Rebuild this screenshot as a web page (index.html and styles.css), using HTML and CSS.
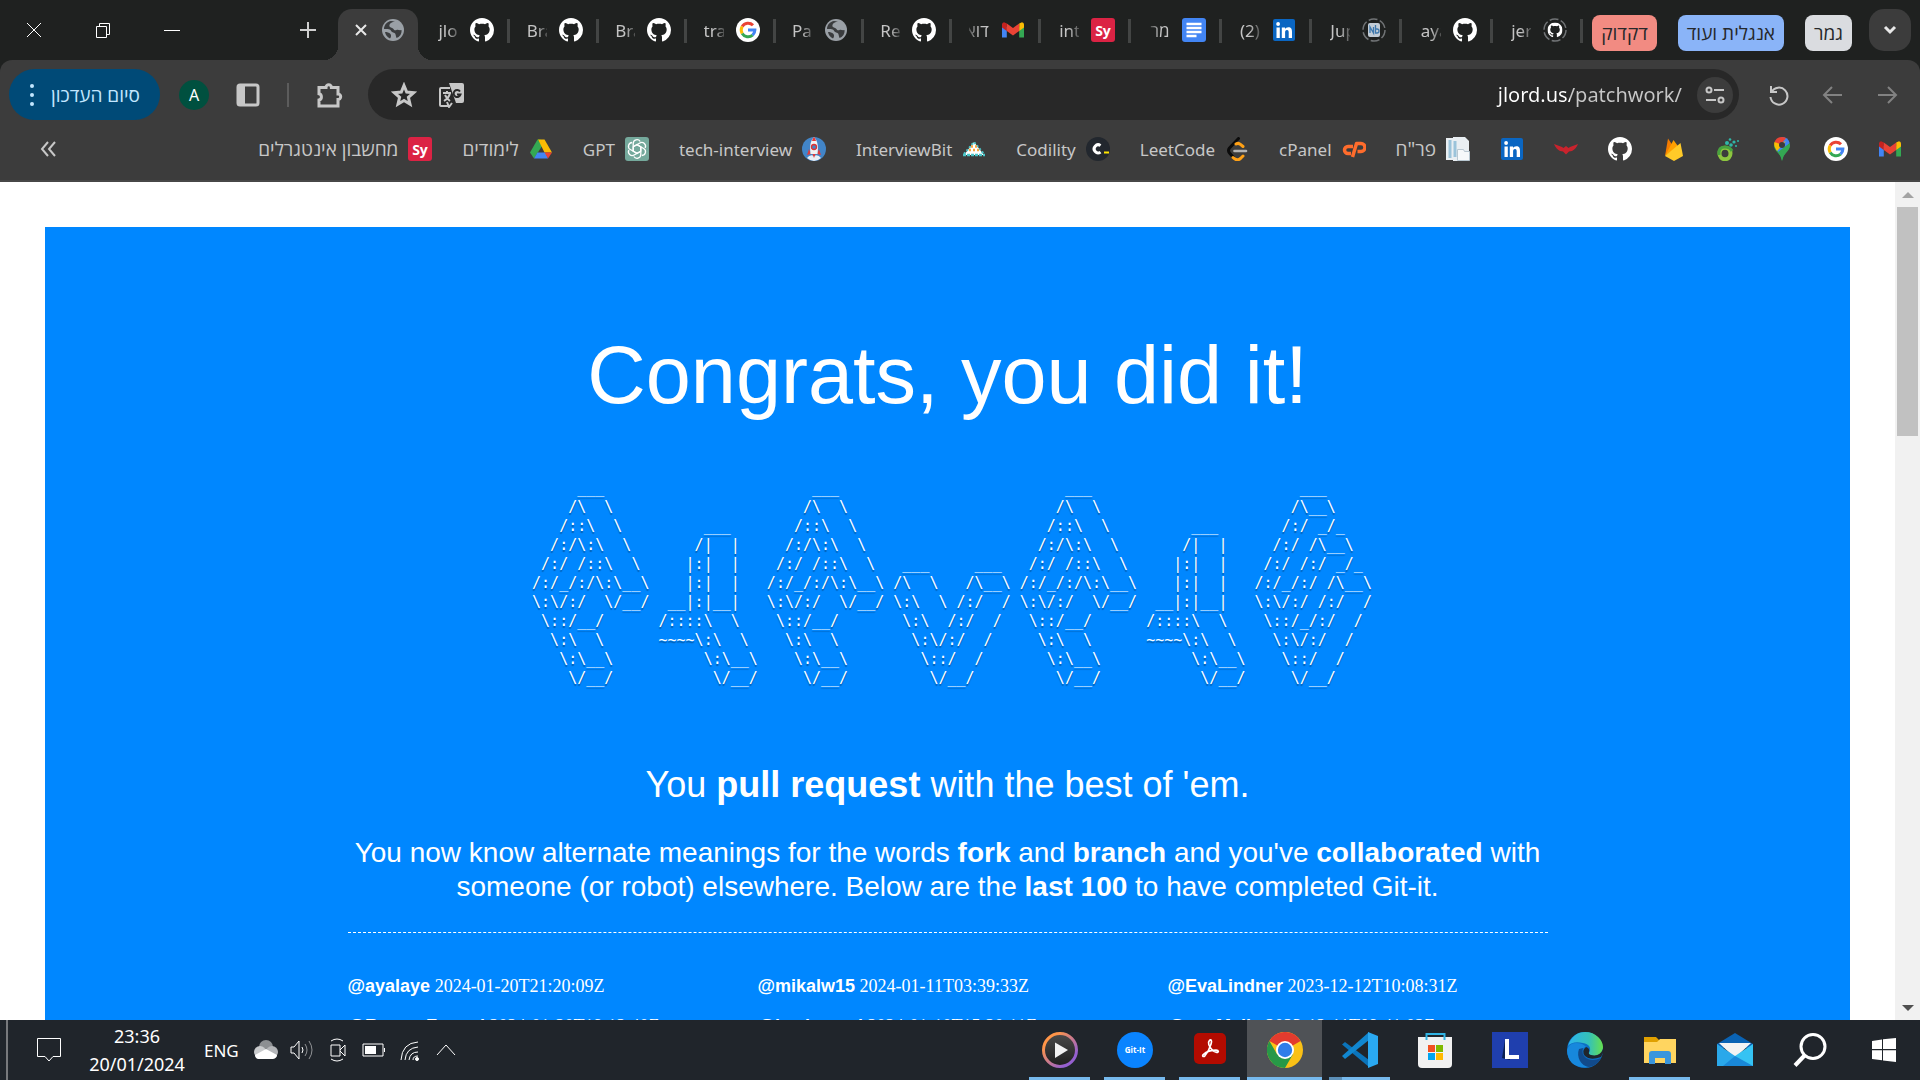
FILE: index.html
```html
<!DOCTYPE html>
<html lang="en">
<head>
<meta charset="utf-8">
<title>jlord.us/patchwork/</title>
<link rel="stylesheet" href="styles.css">
</head>
<body>
<svg class="defs" aria-hidden="true">
  <defs>
    <linearGradient id="ring" x1="0" y1="0" x2="1" y2="1"><stop offset="0.2" stop-color="#ff9548"/><stop offset="0.8" stop-color="#9560d0"/></linearGradient>
    <linearGradient id="edgeTop" x1="0" y1="0" x2="1" y2="0"><stop offset="0" stop-color="#2bb3ee"/><stop offset="0.6" stop-color="#35c1b8"/><stop offset="1" stop-color="#66e04e"/></linearGradient>
    <linearGradient id="play" x1="0" y1="0" x2="0" y2="1"><stop offset="0" stop-color="#4a4a4a"/><stop offset="1" stop-color="#1e1e1e"/></linearGradient>
  </defs>
  <symbol id="github" viewBox="0 0 16 16"><path fill="currentColor" d="M8 0C3.58 0 0 3.58 0 8c0 3.54 2.29 6.53 5.47 7.59.4.07.55-.17.55-.38 0-.19-.01-.82-.01-1.49-2.01.37-2.53-.49-2.69-.94-.09-.23-.48-.94-.82-1.13-.28-.15-.68-.52-.01-.53.63-.01 1.08.58 1.23.82.72 1.21 1.87.87 2.33.66.07-.52.28-.87.51-1.07-1.78-.2-3.64-.89-3.64-3.95 0-.87.31-1.59.82-2.15-.08-.2-.36-1.02.08-2.12 0 0 .67-.21 2.2.82.64-.18 1.32-.27 2-.27s1.36.09 2 .27c1.53-1.04 2.2-.82 2.2-.82.44 1.1.16 1.92.08 2.12.51.56.82 1.27.82 2.15 0 3.07-1.87 3.75-3.65 3.95.29.25.54.73.54 1.48 0 1.07-.01 1.93-.01 2.2 0 .21.15.46.55.38A8.01 8.01 0 0 0 16 8c0-4.42-3.58-8-8-8z"/></symbol>
  <symbol id="globe" viewBox="0 0 24 24"><circle cx="12" cy="12" r="11" fill="#9aa0a6"/><path fill="#3a3c3e" d="M14 3.500C10 4 8 6 8.500 8.500c1 1.500 3 1 4 2.500.5 1.500 2 1.500 3 1 1.500-.5 3 .5 5 0 .5 4-2 7-5 8-1-2.500-.5-4-2-5-2-.5-3-1-4-3C8 10.500 5 11 3 11 3 7 6 3.500 10 3zM4 14c2 0 4 .5 5.500 2 1 1.500.5 3-.5 4.500C6 19 4.500 17 4 14z"/></symbol>
  <symbol id="google" viewBox="0 0 24 24"><circle cx="12" cy="12" r="12" fill="#fff"/><path fill="none" stroke="#ea4335" stroke-width="3" d="M6.200 8.500A6.900 6.900 0 0 1 17 7.200"/><path fill="none" stroke="#fbbc05" stroke-width="3" d="M6.200 8.500a7 7 0 0 0 0 7"/><path fill="none" stroke="#34a853" stroke-width="3" d="M6.200 15.500a6.900 6.900 0 0 0 10.400 1.700"/><path fill="none" stroke="#4285f4" stroke-width="3" d="M12 12h6.900a7 7 0 0 1-2.300 5.200"/></symbol>
  <symbol id="gmail" viewBox="0 0 24 24"><path fill="#4285f4" d="M1 6v13.500h4.800V9z"/><path fill="#34a853" d="M23 6v13.500h-4.800V9z"/><path fill="#fbbc04" d="M18.200 5.500L21 4.200q2 .2 2 2.300v3l-4.800 3.500z"/><path fill="#c5221f" d="M1 9.500v-3q0-2.100 2-2.300l2.800 1.300V13z"/><path fill="#ea4335" d="M5.800 5.500L12 10l6.200-4.500V13L12 17.500 5.800 13z"/></symbol>
  <symbol id="symbolab" viewBox="0 0 24 24"><rect width="24" height="24" rx="3" fill="#db2344"/><text x="12" y="18" text-anchor="middle" class="glyph-sy">Sy</text></symbol>
  <symbol id="docs" viewBox="0 0 24 24"><rect width="24" height="24" rx="3" fill="#4285f4"/><path stroke="#fff" stroke-width="2.500" d="M4.500 6h15M4.500 10h15M4.500 14h15M4.500 18h10"/></symbol>
  <symbol id="linkedin" viewBox="0 0 24 24"><rect x="1" y="1" width="22" height="22" rx="2" fill="#0a66c2"/><path fill="#fff" d="M4.500 9.500h3.300V20H4.500zM9.800 9.500H13V11c.6-1.100 1.800-1.800 3.300-1.800 3 0 3.700 2 3.700 4.600V20h-3.300v-5.500c0-1.500-.2-2.500-1.700-2.500s-1.900 1.100-1.900 2.500V20H9.800z"/><circle cx="6.100" cy="6" r="1.900" fill="#fff"/></symbol>
  <symbol id="notebook" viewBox="0 0 24 24"><circle cx="12" cy="12" r="11" fill="none" stroke="#707375" stroke-width="1.500" stroke-dasharray="9 2.500"/><rect x="6" y="5" width="12" height="14" rx="2" fill="#c3cdd6"/><path d="M8 15V9l3.500 6V9M13.500 7v8h1.500a2 2 0 0 0 0-4h-1.500" fill="none" stroke="#3f79ae" stroke-width="1.300"/></symbol>
  <symbol id="ghload" viewBox="0 0 24 24"><circle cx="12" cy="12" r="11" fill="none" stroke="#707375" stroke-width="1.500" stroke-dasharray="9 2.500"/><use href="#github" x="4.500" y="4.500" width="15" height="15"/></symbol>
  <symbol id="drive" viewBox="0 0 24 24"><path fill="#34a853" d="M8.500 2.500h1L13 9 5 21.500 1 15.500z"/><path fill="#188038" d="M8.500 2.500H12l1.500 7z"/><path fill="#fbbc04" d="M9 2.500h6.500L23 15.500h-7.500z"/><path fill="#4285f4" d="M8.500 15.500h8L19 21.500H5z"/><path fill="#ea4335" d="M15.500 15.500H23l-4 6z"/></symbol>
  <symbol id="gpt" viewBox="0 0 24 24"><rect width="24" height="24" rx="3" fill="#75a99c"/><g fill="none" stroke="#fff" stroke-width="1.300"><g id="petal"><path d="M8.200 10V6.500a3.800 3.800 0 0 1 7-2M8.200 10v4.200L12 16.400"/></g><use href="#petal" transform="rotate(60 12 12)"/><use href="#petal" transform="rotate(120 12 12)"/><use href="#petal" transform="rotate(180 12 12)"/><use href="#petal" transform="rotate(240 12 12)"/><use href="#petal" transform="rotate(300 12 12)"/></g></symbol>
  <symbol id="rocket" viewBox="0 0 24 24"><circle cx="12" cy="12" r="12" fill="#4285c8"/><path fill="#e03b3b" d="M7 12l-2 6 4-1zM17 12l2 6-4-1z"/><path fill="#f2f2f2" d="M12 0c3.500 4 4.500 8 3.500 17h-7C7.500 8 8.500 4 12 0z"/><path fill="#e03b3b" d="M12 0c1 1 1.700 2.500 2 4h-4c.3-1.500 1-3 2-4z"/><circle cx="12" cy="10" r="2.500" fill="#4285c8" stroke="#d33" stroke-width="1.300"/><path fill="#e8eef5" d="M5 21q3-4 7-2 4-2 7 2-7 6-14 0z"/><path fill="#e03b3b" d="M10.500 17h3L12 21z"/></symbol>
  <symbol id="interviewbit" viewBox="0 0 24 24"><path fill="#fff" d="M12 5l10 13H2z"/><path stroke="#4cc5c8" stroke-width="2.500" stroke-dasharray="3 1" d="M1 18h22"/><path fill="none" stroke="#4cc5c8" stroke-width="2" stroke-dasharray="2 2" d="M2 17L12 5l10 12"/><path stroke="#f5a742" stroke-width="2.500" stroke-dasharray="2 2" d="M7 13h10M9 9.500h6"/></symbol>
  <symbol id="codility" viewBox="0 0 24 24"><circle cx="12" cy="12" r="12" fill="#22272e"/><path fill="none" stroke="#fff" stroke-width="3" d="M14.500 8.600a4 4 0 1 0 0 6.500"/><path stroke="#ffe600" stroke-width="2" d="M18 15.500h5"/></symbol>
  <symbol id="leetcode" viewBox="0 0 24 24"><path fill="none" stroke="#0b0b0b" stroke-width="3" stroke-linecap="round" d="M13.500 1.500L4.500 11q-2 2.500 0 5l4 4.500"/><path fill="none" stroke="#ffa116" stroke-width="3" stroke-linecap="round" d="M11 7q2.500-1.500 4.500.5L18 9.500M8 20.500q4 4 7.500 1l2.500-2.500"/><path stroke="#b3b3b3" stroke-width="2.600" stroke-linecap="round" d="M9.500 14h11.500"/></symbol>
  <symbol id="cpanel" viewBox="0 0 24 24"><path fill="none" stroke="#ff6c2c" stroke-width="3.500" stroke-linejoin="round" d="M11 9.500H6a3.500 3.500 0 0 0 0 7h3M10.500 20l4-13.500h4.500a3.600 3.600 0 0 1 0 8h-3.500"/></symbol>
  <symbol id="papers" viewBox="0 0 24 24"><path fill="#e9eef2" d="M0 1h13v22H0zM7 0h12l4 4v20H7z"/><path stroke="#9bc3da" stroke-width="3" d="M4 3v18M9 4v16"/><path fill="#f6f9fb" stroke="#b8c7d1" stroke-width="1" d="M11.500 12.500h6l1 2h5v9h-12z"/></symbol>
  <symbol id="bird" viewBox="0 0 24 24"><path fill="#c9232d" d="M0 7l8 3 1.500 1 2.500-2 2.500 2L16 10l8-3q-2 5-6 7l-3 .5-3 3-3-3-3-.5Q2 12 0 7z"/></symbol>
  <symbol id="firebase" viewBox="0 0 24 24"><path fill="#f57c00" d="M3 19L6 1.500 11 9z"/><path fill="#ffa000" d="M3 19L11.500 3l5 7z"/><path fill="#ffca28" d="M3 19L18.500 6 21 19l-9 5z"/></symbol>
  <symbol id="olive" viewBox="0 0 24 24"><ellipse cx="9" cy="16.500" rx="5.500" ry="5.800" fill="none" stroke="#8dc63f" stroke-width="4"/><path fill="none" stroke="#47a23f" stroke-width="3" d="M3 18q-1-8 6-8 5 0 7 4"/><g fill="#2fb8a8"><circle cx="11" cy="6" r="2"/><circle cx="15" cy="8" r="1.800"/><circle cx="18" cy="5" r="1.600"/><circle cx="14" cy="2.500" r="1.300"/><circle cx="22" cy="4" r="1"/><circle cx="20" cy="9" r="1"/></g></symbol>
  <symbol id="maps" viewBox="0 0 24 24"><path fill="#34a853" d="M12 24c0-7-8-9-8-16h16c0 7-8 9-8 16z"/><path fill="#4285f4" d="M12 0a8 8 0 0 1 7.700 6L10 17 6 12z"/><path fill="#ea4335" d="M12 0a8 8 0 0 0-7.500 5L10 9l6-8q-2-1-4-1z"/><path fill="#fbbc04" d="M4.500 5Q3 9 7 14l9-10-6 3z"/><path fill="#34a853" d="M19.700 6Q21 10 16 15q-3 4-4 9-1-5-4-9z"/><circle cx="12" cy="8" r="3" fill="#3c3c3c"/></symbol>
  <symbol id="acrobat" viewBox="0 0 24 24"><path fill="none" stroke="#fff" stroke-width="1.500" d="M11 5c1.500-1.500 2.500 0 1.500 3-1 3.500-3.500 8-5.500 10.500-1.500 1.500-3 0-1-1.500 3-2.500 8-3.500 11-3.500 2.500 0 2.500 2 .5 2-3-.3-6-4-7-7-.5-1.700 0-3 .5-3.500z"/></symbol>
</svg>

<header class="browser">
  <div class="tabstrip">
    <div class="window-controls">
      <button aria-label="Close"><svg width="16" height="16"><path d="M1 1l14 14M15 1L1 15"/></svg></button>
      <button aria-label="Restore"><svg width="16" height="16"><path d="M1.500 4.500h10v11h-10zM4.500 4.500v-3h10v11h-3"/></svg></button>
      <button aria-label="Minimize"><svg width="16" height="16"><path d="M0 8.500h16"/></svg></button>
    </div>
    <button class="new-tab" aria-label="New tab"><svg width="16" height="16"><path d="M8 0v16M0 8h16"/></svg></button>
    <button class="tab-active" aria-label="jlord.us/patchwork"><svg width="14" height="14" class="x"><path d="M2 2l10 10M12 2L2 12"/></svg><svg class="fav"><use href="#globe"/></svg></button>
    <nav class="tabs">
      <button class="tab"><span class="cut">jlo</span><svg class="fav"><use href="#github"/></svg></button>
      <button class="tab"><span class="cut">Bra</span><svg class="fav"><use href="#github"/></svg></button>
      <button class="tab"><span class="cut">Bra</span><svg class="fav"><use href="#github"/></svg></button>
      <button class="tab"><span class="cut">tra</span><svg class="fav"><use href="#google"/></svg></button>
      <button class="tab"><span class="cut">Pa</span><svg class="fav"><use href="#globe"/></svg></button>
      <button class="tab"><span class="cut">Re</span><svg class="fav"><use href="#github"/></svg></button>
      <button class="tab"><span class="cut rtl">דוא</span><svg class="fav"><use href="#gmail"/></svg></button>
      <button class="tab"><span class="cut">int</span><svg class="fav"><use href="#symbolab"/></svg></button>
      <button class="tab"><span class="cut rtl">מר</span><svg class="fav"><use href="#docs"/></svg></button>
      <button class="tab"><span class="cut">(2)</span><svg class="fav"><use href="#linkedin"/></svg></button>
      <button class="tab"><span class="cut">Jup</span><svg class="fav"><use href="#notebook"/></svg></button>
      <button class="tab"><span class="cut">aya</span><svg class="fav"><use href="#github"/></svg></button>
      <button class="tab"><span class="cut">jer</span><svg class="fav"><use href="#ghload"/></svg></button>
    </nav>
    <div class="groups">
      <button class="chip red">דקדוק</button>
      <button class="chip blue">אנגלית ועוד</button>
      <button class="chip grey">גמר</button>
    </div>
    <button class="tab-search" aria-label="Search tabs"><svg width="14" height="10"><path d="M2 2l5 5 5-5"/></svg></button>
  </div>

  <div class="toolbar">
    <button class="update"><svg width="6" height="24"><circle cx="3" cy="3" r="2"/><circle cx="3" cy="12" r="2"/><circle cx="3" cy="21" r="2"/></svg><span>סיום העדכון</span></button>
    <button class="avatar">A</button>
    <button class="tool" aria-label="Side panel"><svg width="24" height="24"><path class="solid" d="M2 1h7v22H2z"/><rect x="2" y="2" width="20" height="20" rx="2"/></svg></button>
    <span class="rule"></span>
    <button class="tool" aria-label="Extensions"><svg width="28" height="28"><path d="M3 6.500h7a2.700 2.700 0 0 1 5.400 0H22v6.500a2.700 2.700 0 0 1 0 5.400V25H3v-6a3.200 3.200 0 0 0 0-6.200z"/></svg></button>
    <div class="omnibox">
      <button aria-label="Bookmark"><svg width="26" height="26"><path d="M13 3.500l2.700 6.600 7 .6-5.300 4.600 1.600 6.900-6-3.700-6 3.700 1.600-6.900-5.300-4.600 7-.6z"/></svg></button>
      <button aria-label="Translate"><svg width="26" height="26"><path class="solid" d="M10 1h13q2 0 2 2v16q0 2-2 2h-6z"/><path class="thin" d="M13 21l-3 4-2-5M11 6H2q-1 0-1 1v16q0 1 1 1h9"/><path class="thin" d="M4 11h8M8 9v2M11 11q-1 5-6 8M6 13q2 4 5 6"/><path class="dark" d="M21 9.500a3.500 3.500 0 1 0 .5 3h-3.500"/></svg></button>
      <input type="text" aria-label="Address" value="jlord.us/patchwork/">
      <button class="tune" aria-label="Site information"><svg width="20" height="18"><circle cx="4" cy="4" r="2.500"/><path d="M9 4h10M1 14h10"/><circle cx="16" cy="14" r="2.500"/></svg></button>
    </div>
    <div class="nav">
      <button aria-label="Reload"><svg width="24" height="24"><path d="M4 3v6h6M4.500 9a8.500 8.500 0 1 1-1 5"/></svg></button>
      <button class="off" aria-label="Back"><svg width="24" height="24"><path d="M21 12H4M11 4l-8 8 8 8"/></svg></button>
      <button class="off" aria-label="Forward"><svg width="24" height="24"><path d="M3 12h17M13 4l8 8-8 8"/></svg></button>
    </div>
  </div>

  <nav class="bookmarks">
    <button class="more" aria-label="More bookmarks"><svg width="16" height="16"><path d="M8 1L2 8l6 7M15 1L9 8l6 7"/></svg></button>
    <a href="#" class="he">מחשבון אינטגרלים<svg class="fav"><use href="#symbolab"/></svg></a>
    <a href="#" class="he">לימודים<svg class="fav"><use href="#drive"/></svg></a>
    <a href="#">GPT<svg class="fav"><use href="#gpt"/></svg></a>
    <a href="#">tech-interview<svg class="fav"><use href="#rocket"/></svg></a>
    <a href="#">InterviewBit<svg class="fav"><use href="#interviewbit"/></svg></a>
    <a href="#">Codility<svg class="fav"><use href="#codility"/></svg></a>
    <a href="#">LeetCode<svg class="fav"><use href="#leetcode"/></svg></a>
    <a href="#">cPanel<svg class="fav"><use href="#cpanel"/></svg></a>
    <a href="#" class="he">פר"ח<svg class="fav"><use href="#papers"/></svg></a>
    <a href="#" aria-label="LinkedIn"><svg class="fav"><use href="#linkedin"/></svg></a>
    <a href="#" aria-label="Bird"><svg class="fav"><use href="#bird"/></svg></a>
    <a href="#" aria-label="GitHub"><svg class="fav"><use href="#github"/></svg></a>
    <a href="#" aria-label="Firebase"><svg class="fav"><use href="#firebase"/></svg></a>
    <a href="#" aria-label="Olive"><svg class="fav"><use href="#olive"/></svg></a>
    <a href="#" aria-label="Maps"><svg class="fav"><use href="#maps"/></svg></a>
    <a href="#" aria-label="Google"><svg class="fav"><use href="#google"/></svg></a>
    <a href="#" aria-label="Gmail"><svg class="fav"><use href="#gmail"/></svg></a>
  </nav>
</header>

<div class="viewport">
  <main class="page">
    <section class="panel">
      <h1>Congrats, you did it!</h1>
<pre class="ascii">
     ___                       ___                         ___                       ___     
    /\  \                     /\  \                       /\  \                     /\__\    
   /::\  \         ___       /::\  \                     /::\  \         ___       /:/ _/_   
  /:/\:\  \       /|  |     /:/\:\  \                   /:/\:\  \       /|  |     /:/ /\__\  
 /:/ /::\  \     |:|  |    /:/ /::\  \   ___     ___   /:/ /::\  \     |:|  |    /:/ /:/ _/_ 
/:/_/:/\:\__\    |:|  |   /:/_/:/\:\__\ /\  \   /\__\ /:/_/:/\:\__\    |:|  |   /:/_/:/ /\__\
\:\/:/  \/__/  __|:|__|   \:\/:/  \/__/ \:\  \ /:/  / \:\/:/  \/__/  __|:|__|   \:\/:/ /:/  /
 \::/__/      /::::\  \    \::/__/       \:\  /:/  /   \::/__/      /::::\  \    \::/_/:/  / 
  \:\  \      ~~~~\:\  \    \:\  \        \:\/:/  /     \:\  \      ~~~~\:\  \    \:\/:/  /  
   \:\__\          \:\__\    \:\__\        \::/  /       \:\__\          \:\__\    \::/  /   
    \/__/           \/__/     \/__/         \/__/         \/__/           \/__/     \/__/    
</pre>
      <h2>You <b>pull request</b> with the best of 'em.</h2>
      <p class="lead">You now know alternate meanings for the words <b>fork</b> and <b>branch</b> and you've <b>collaborated</b> with someone (or robot) elsewhere. Below are the <b>last 100</b> to have completed Git-it.</p>
      <ul class="people">
        <li><a href="#">@ayalaye</a> 2024-01-20T21:20:09Z</li>
        <li><a href="#">@mikalw15</a> 2024-01-11T03:39:33Z</li>
        <li><a href="#">@EvaLindner</a> 2023-12-12T10:08:31Z</li>
        <li><a href="#">@RamonFarmal</a> 2024-01-20T19:12:40Z</li>
        <li><a href="#">@kaehnoval</a> 2024-01-10T15:20:11Z</li>
        <li><a href="#">@sueMalla</a> 2023-12-11T09:41:02Z</li>
      </ul>
    </section>
  </main>
  <div class="scrollbar"><svg width="12" height="6"><path fill="#a3a3a3" d="M0 6l6-6 6 6z"/></svg><div class="thumb"></div><svg width="12" height="6"><path fill="#505050" d="M0 0h12L6 6z"/></svg></div>
</div>

<footer class="taskbar">
  <span class="show-desktop"></span>
  <button class="notice" aria-label="Notifications"><svg width="26" height="26"><path d="M1.500 1.500h23v18h-7.500L13 24l-4-4.500H1.500z"/></svg></button>
  <div class="clock"><span>23:36</span><span>20/01/2024</span></div>
  <span class="lang">ENG</span>
  <div class="tray">
    <svg width="26" height="24"><circle cx="13" cy="9" r="7" fill="#8c8f92"/><circle cx="7" cy="14" r="6" fill="#c9cbcd"/><circle cx="19" cy="14" r="6" fill="#b4b6b9"/><path fill="#fff" d="M2 17l11-6 11 6q0 3-4 4H5q-3-1-3-4z"/></svg>
    <svg width="26" height="24"><path d="M2 9h3l5-6v18l-5-6H2zM13 9q2 3 0 6"/><path opacity=".5" d="M16 6q4 6 0 12M20 3q6 9 0 18"/></svg>
    <svg width="26" height="24"><path d="M6 7h9v11H6zM15 12l5-5v11l-5-5M6 3q6-4 12 0M6 21q6 4 12 0"/></svg>
    <svg width="26" height="24"><path d="M2 6h20v12H2zM23.500 10v4"/><path fill="#fff" stroke="none" d="M4 8h11v8H4z"/></svg>
    <svg width="26" height="24"><path d="M4 22Q5 5 21 4M8 22q1-12 13-13M12 22q1-8 9-8M16 22q0-4 5-4"/><circle cx="20" cy="21" r="1.500" fill="#fff"/></svg>
    <svg width="26" height="24"><path d="M4 17l9-10 9 10"/></svg>
  </div>
  <nav class="apps">
    <button class="app run" aria-label="Media player"><svg viewBox="0 0 36 36"><circle cx="18" cy="18" r="16.500" fill="url(#play)" stroke="url(#ring)" stroke-width="3"/><path fill="#f2f2f2" d="M13 10.500v15.500l13-8z"/></svg></button>
    <button class="app run" aria-label="Git-it"><svg viewBox="0 0 36 36"><circle cx="18" cy="18" r="18" fill="#0a84ff"/><text x="18" y="21" text-anchor="middle" class="glyph-git">Git-It</text></svg></button>
    <button class="app run" aria-label="Acrobat"><svg viewBox="0 0 36 36"><rect x="2" y="1" width="32" height="31" rx="5" fill="#b30b00"/><use href="#acrobat" x="5" y="3" width="27" height="27"/></svg></button>
    <button class="app run current" aria-label="Chrome"><svg viewBox="0 0 36 36"><circle cx="18" cy="18" r="18" fill="#fbc116"/><path fill="#e33b2e" d="M18 18L2.400 9A18 18 0 0 1 33.600 9z"/><path fill="#279847" d="M2.400 9A18 18 0 0 0 18 36l7.800-13.500L18 18l-7.800 4.500z"/><circle cx="18" cy="18" r="9" fill="#fff"/><circle cx="18" cy="18" r="7.200" fill="#2f7de9"/></svg></button>
    <button class="app run multi" aria-label="Visual Studio Code"><svg viewBox="0 0 36 36"><path fill="#0b74ba" d="M0 12.500l3-2.500 24 18v7z"/><path fill="#1187d0" d="M0 24l3 3 24-19V0z"/><path fill="#2aa9f2" d="M26 0l10 4v28l-10 4z"/></svg></button>
    <button class="app" aria-label="Store"><svg viewBox="0 0 36 36"><path fill="none" stroke="#31b4e4" stroke-width="2" d="M9.500 8V2h18v6"/><path fill="#f1f1f1" d="M1 5h34v27q0 4-4 4H5q-4 0-4-4z"/><path fill="none" stroke="#31b4e4" stroke-width="2" d="M9.500 8V5M27.500 8V5"/><path fill="#f25022" d="M11 13h7v7h-7z"/><path fill="#7fba00" d="M19 13h7v7h-7z"/><path fill="#00a4ef" d="M11 21h7v7h-7z"/><path fill="#ffb900" d="M19 21h7v7h-7z"/></svg></button>
    <button class="app" aria-label="L"><svg viewBox="0 0 36 36"><path fill="#1f3fae" d="M0 0h36v36H0z"/><path fill="#0a2050" d="M13 8l-3 18 8 2z"/><path fill="none" stroke="#fff" stroke-width="4" d="M15 7v18h12"/></svg></button>
    <button class="app" aria-label="Edge"><svg viewBox="0 0 36 36"><circle cx="18" cy="18" r="18" fill="#0d6fc4"/><path fill="url(#edgeTop)" d="M1 14C4 4 11 0 18 0c11 0 18 8 18 15 0 6-5 9-9 9-4 .5-6-1-5-3 3-5 0-9-6-10C10 9.500 4 10 1 14z"/><path fill="#1788dd" d="M0 18Q2 11 9 11q7 0 10 4c-7 1-10 14 2 20Q1 37 0 18z"/><path fill="#114a8b" d="M12 17c-3 8 2 17 10 18q8-1 12-9-9 4-15 0-5-4-3-10z"/><path fill="#20262d" d="M19 15q-5 4-1 9 5 5 16 1l2-4v-4q-3 8-12 6-3-1-2-3 1-4-3-5z"/></svg></button>
    <button class="app run" aria-label="File Explorer"><svg viewBox="0 0 36 36"><path fill="#e0a000" d="M2 5h12l3 3v4H2z"/><path fill="#ffd560" d="M2 10h13l3-3h16v24H2z"/><path fill="#3a96dd" d="M7 32V22q0-3 3-3h16q3 0 3 3v10h-6v-6H13v6z"/></svg></button>
    <button class="app" aria-label="Mail"><svg viewBox="0 0 36 36"><path fill="#0a63b4" d="M0 12L18 1l18 11v4H0z"/><path fill="#f3f3f3" d="M2 11h32L18 26z"/><path fill="#2aa8ea" d="M0 12l18 12v10H0z"/><path fill="#35c3f3" d="M36 12L18 24l-8 10h26z"/><path fill="#1988d8" d="M18 24l18 10H6z"/></svg></button>
    <button class="app" aria-label="Search"><svg viewBox="0 0 36 36"><circle cx="21" cy="14.500" r="12" fill="none" stroke="#fff" stroke-width="3"/><path stroke="#fff" stroke-width="4" d="M13 23L3 33.500"/></svg></button>
    <button class="app" aria-label="Start"><svg viewBox="0 0 36 36"><path fill="#fff" d="M6 9l10-1.500V17H6zM17 7.300L30 6v11H17zM6 18.300h10v10L6 27zM17 18.300h13V30l-13-1.600z"/></svg></button>
  </nav>
</footer>
</body>
</html>
```
FILE: styles.css
```css
* { box-sizing: border-box; }
body {
  margin: 0;
  height: 100vh;
  display: flex;
  flex-direction: column;
  overflow: hidden;
  font-family: "Noto Sans", "Open Sans", sans-serif;
  background: #fff;
}
button {
  border: 0;
  padding: 0;
  margin: 0;
  background: none;
  color: inherit;
  font: inherit;
  display: flex;
  align-items: center;
  justify-content: center;
}
svg { display: block; flex: none; }
.defs { width: 0; height: 0; position: absolute; }
.fav { width: 24px; height: 24px; }
.glyph-sy { font: bold 14px "Open Sans", sans-serif; fill: #fff; }
.glyph-git { font: bold 8px "Open Sans", sans-serif; fill: #fff; }

/* Browser frame */
.browser { background: #1f2120; color: #c7c7c7; flex: none; }
.tabstrip { display: flex; height: 60px; }
.window-controls { display: flex; width: 206px; margin-right: 76px; }
.window-controls button { flex: 1; }
.window-controls svg { fill: none; stroke: #fff; stroke-width: 1; }
.new-tab { width: 52px; margin-right: 4px; }
.new-tab svg { fill: none; stroke: #d0d0d0; stroke-width: 2; }
.tab-active {
  width: 80px;
  height: 51px;
  margin-top: 9px;
  gap: 13px;
  background: #3c3c3c;
  border-radius: 14px 14px 0 0;
  padding: 0 0 9px 2px;
  position: relative;
}
.tab-active::before, .tab-active::after {
  content: "";
  position: absolute;
  bottom: 0;
  width: 14px;
  height: 14px;
}
.tab-active::before { left: -14px; background: radial-gradient(circle at 0 0, transparent 14px, #3c3c3c 14px); }
.tab-active::after { right: -14px; background: radial-gradient(circle at 100% 0, transparent 14px, #3c3c3c 14px); }
.x { fill: none; stroke: #e8e8e8; stroke-width: 2; }
.tabs {
  flex: 1;
  display: grid;
  grid-template-columns: repeat(7, 88fr) repeat(6, 90fr);
  padding-left: 4px;
  font-size: 17px;
}
.tab { gap: 12px; color: #c4c4c4; position: relative; justify-content: flex-end; padding-right: 16px; }
.tab::after {
  content: "";
  position: absolute;
  right: 0;
  top: 19px;
  width: 3px;
  height: 24px;
  background: #434544;
}
.tab .fav { color: #fff; }
.cut {
  width: 20px;
  overflow: hidden;
  white-space: nowrap;
  text-align: left;
  -webkit-mask-image: linear-gradient(to right, #000 10px, transparent 24px);
}
.cut.rtl { direction: rtl; text-align: right; -webkit-mask-image: linear-gradient(to left, #000 10px, transparent 24px); }
.groups { display: flex; gap: 21px; padding: 15px 17px 9px 9px; }
.chip { border-radius: 8px; color: #26282b; font-size: 19px; padding: 0 9px; white-space: nowrap; }
.red { background: #f28b82; }
.blue { background: #8ab4f8; }
.grey { background: #dadce0; }
.tab-search { width: 42px; height: 42px; margin: 9px 9px 0 0; border-radius: 15px; background: #3c3c3c; }
.tab-search svg { fill: none; stroke: #e8e8e8; stroke-width: 3; }

.toolbar {
  display: flex;
  align-items: center;
  height: 69px;
  padding: 0 21px 0 9px;
  background: #3c3c3c;
  border-radius: 12px 12px 0 0;
}
.update { width: 151px; height: 51px; border-radius: 26px; background: #004a77; color: #c2e7ff; font-size: 19px; gap: 16px; }
.update svg { fill: #c2e7ff; }
.avatar { width: 30px; height: 30px; margin: 0 27px 0 19px; border-radius: 50%; background: #00503f; color: #fff; font-size: 16px; }
.tool svg, .omnibox svg, .nav svg { fill: none; stroke: #c7c7c7; stroke-width: 3; }
.toolbar .solid { fill: #c7c7c7; stroke: none; }
.toolbar .thin { stroke-width: 2; }
.toolbar .dark { stroke: #282828; stroke-width: 2; }
.rule { width: 2px; height: 24px; background: #5c5c5c; margin: 0 27px; }
.tool + .omnibox { margin-left: 24px; }
.omnibox {
  flex: 1;
  display: flex;
  align-items: center;
  gap: 22px;
  height: 51px;
  padding: 0 6px 0 23px;
  border-radius: 26px;
  background: #282828;
}
.omnibox input {
  flex: 1;
  min-width: 0;
  border: 0;
  padding: 0;
  font-family: inherit;
  font-size: 20px;
  line-height: 30px;
  text-align: right;
  color: transparent;
  background: linear-gradient(to left, #c7c7c7 112px, #fff 112px);
  -webkit-background-clip: text;
  background-clip: text;
  margin-right: -7px;
}
.omnibox .tune { width: 36px; height: 36px; border-radius: 50%; background: #3c3c3c; }
.omnibox .tune svg { stroke-width: 2; }
.nav { display: flex; gap: 30px; margin-left: 28px; }
.nav .off { opacity: .5; }
.nav svg { stroke-width: 2; }

.bookmarks {
  display: flex;
  align-items: center;
  justify-content: flex-end;
  gap: 30px;
  height: 53px;
  padding: 0 18px 11px 40px;
  background: #3c3c3c;
  border-bottom: 2px solid #474747;
  font-size: 17px;
}
.bookmarks a { display: flex; align-items: center; gap: 10px; color: #c7c7c7; text-decoration: none; white-space: nowrap; }
.bookmarks .he { font-size: 19px; }
.bookmarks a .fav { color: #fff; }
.more { margin-right: auto; }
.more svg { fill: none; stroke: #c7c7c7; stroke-width: 2; }

/* Web page */
.viewport { flex: 1; min-height: 0; display: flex; }
.page { flex: 1; min-width: 0; padding: 45px 45px 0; overflow: hidden; }
.panel {
  background: #0087ff;
  color: #fff;
  min-height: 900px;
  padding: 102px 20px;
  font-family: "Liberation Sans", Arial, sans-serif;
  text-align: center;
}
h1, h2, p, ul, pre { margin: 0; }
h1 { font-size: 81px; line-height: 92px; font-weight: 400; }
.ascii {
  margin-top: 58px;
  padding-left: 9px;
  font: 15px/19px "DejaVu Sans Mono", monospace;
  text-shadow: 0 2px 1px rgba(0, 0, 0, .3);
}
h2 { margin-top: 75px; font-size: 36px; line-height: 44px; font-weight: 400; }
.lead { max-width: 1200px; margin: 29px auto 0; padding-bottom: 28px; font-size: 28px; line-height: 34px; border-bottom: 1px dashed #fff; }
.people {
  max-width: 1200px;
  margin: 33px auto 0;
  padding: 0;
  list-style: none;
  display: grid;
  grid-template-columns: 410px 410px 1fr;
  text-align: left;
  font: 18px/40px "Liberation Serif", "Times New Roman", serif;
}
.people a { color: #fff; text-decoration: none; font-family: "Liberation Sans", Arial, sans-serif; font-weight: 700; }
.scrollbar { width: 25px; background: #f1f1f1; display: flex; flex-direction: column; align-items: center; padding: 10px 0 9px; }
.thumb { width: 21px; height: 229px; margin: 9px 0 auto; background: #c1c1c1; }

/* Taskbar */
.taskbar { flex: none; display: flex; align-items: center; height: 60px; background: #20252b; color: #fff; font-size: 17px; }
.show-desktop { align-self: stretch; width: 8px; border-right: 2px solid #77797c; }
.notice { width: 82px; }
.notice svg { fill: none; stroke: #fff; stroke-width: 1; }
.clock { display: flex; flex-direction: column; align-items: center; width: 94px; font-size: 18px; line-height: 28px; }
.lang { width: 69px; padding-left: 20px; }
.tray { display: flex; gap: 10px; }
.tray svg { fill: none; stroke: #fff; stroke-width: 1; }
.tray svg:first-child { stroke: none; }
.apps { display: flex; margin-left: auto; align-self: stretch; }
.app { width: 75px; position: relative; }
.app:last-child { width: 73px; }
.app svg { width: 36px; height: 36px; }
.run::after { content: ""; position: absolute; left: 7px; right: 7px; bottom: 0; height: 3px; background: #76b9ed; }
.current { background: #4f5256; }
.current::after { left: 0; right: 0; }
.multi::after { background: linear-gradient(to right, #5c8fb8 13px, #76b9ed 13px); }
```
